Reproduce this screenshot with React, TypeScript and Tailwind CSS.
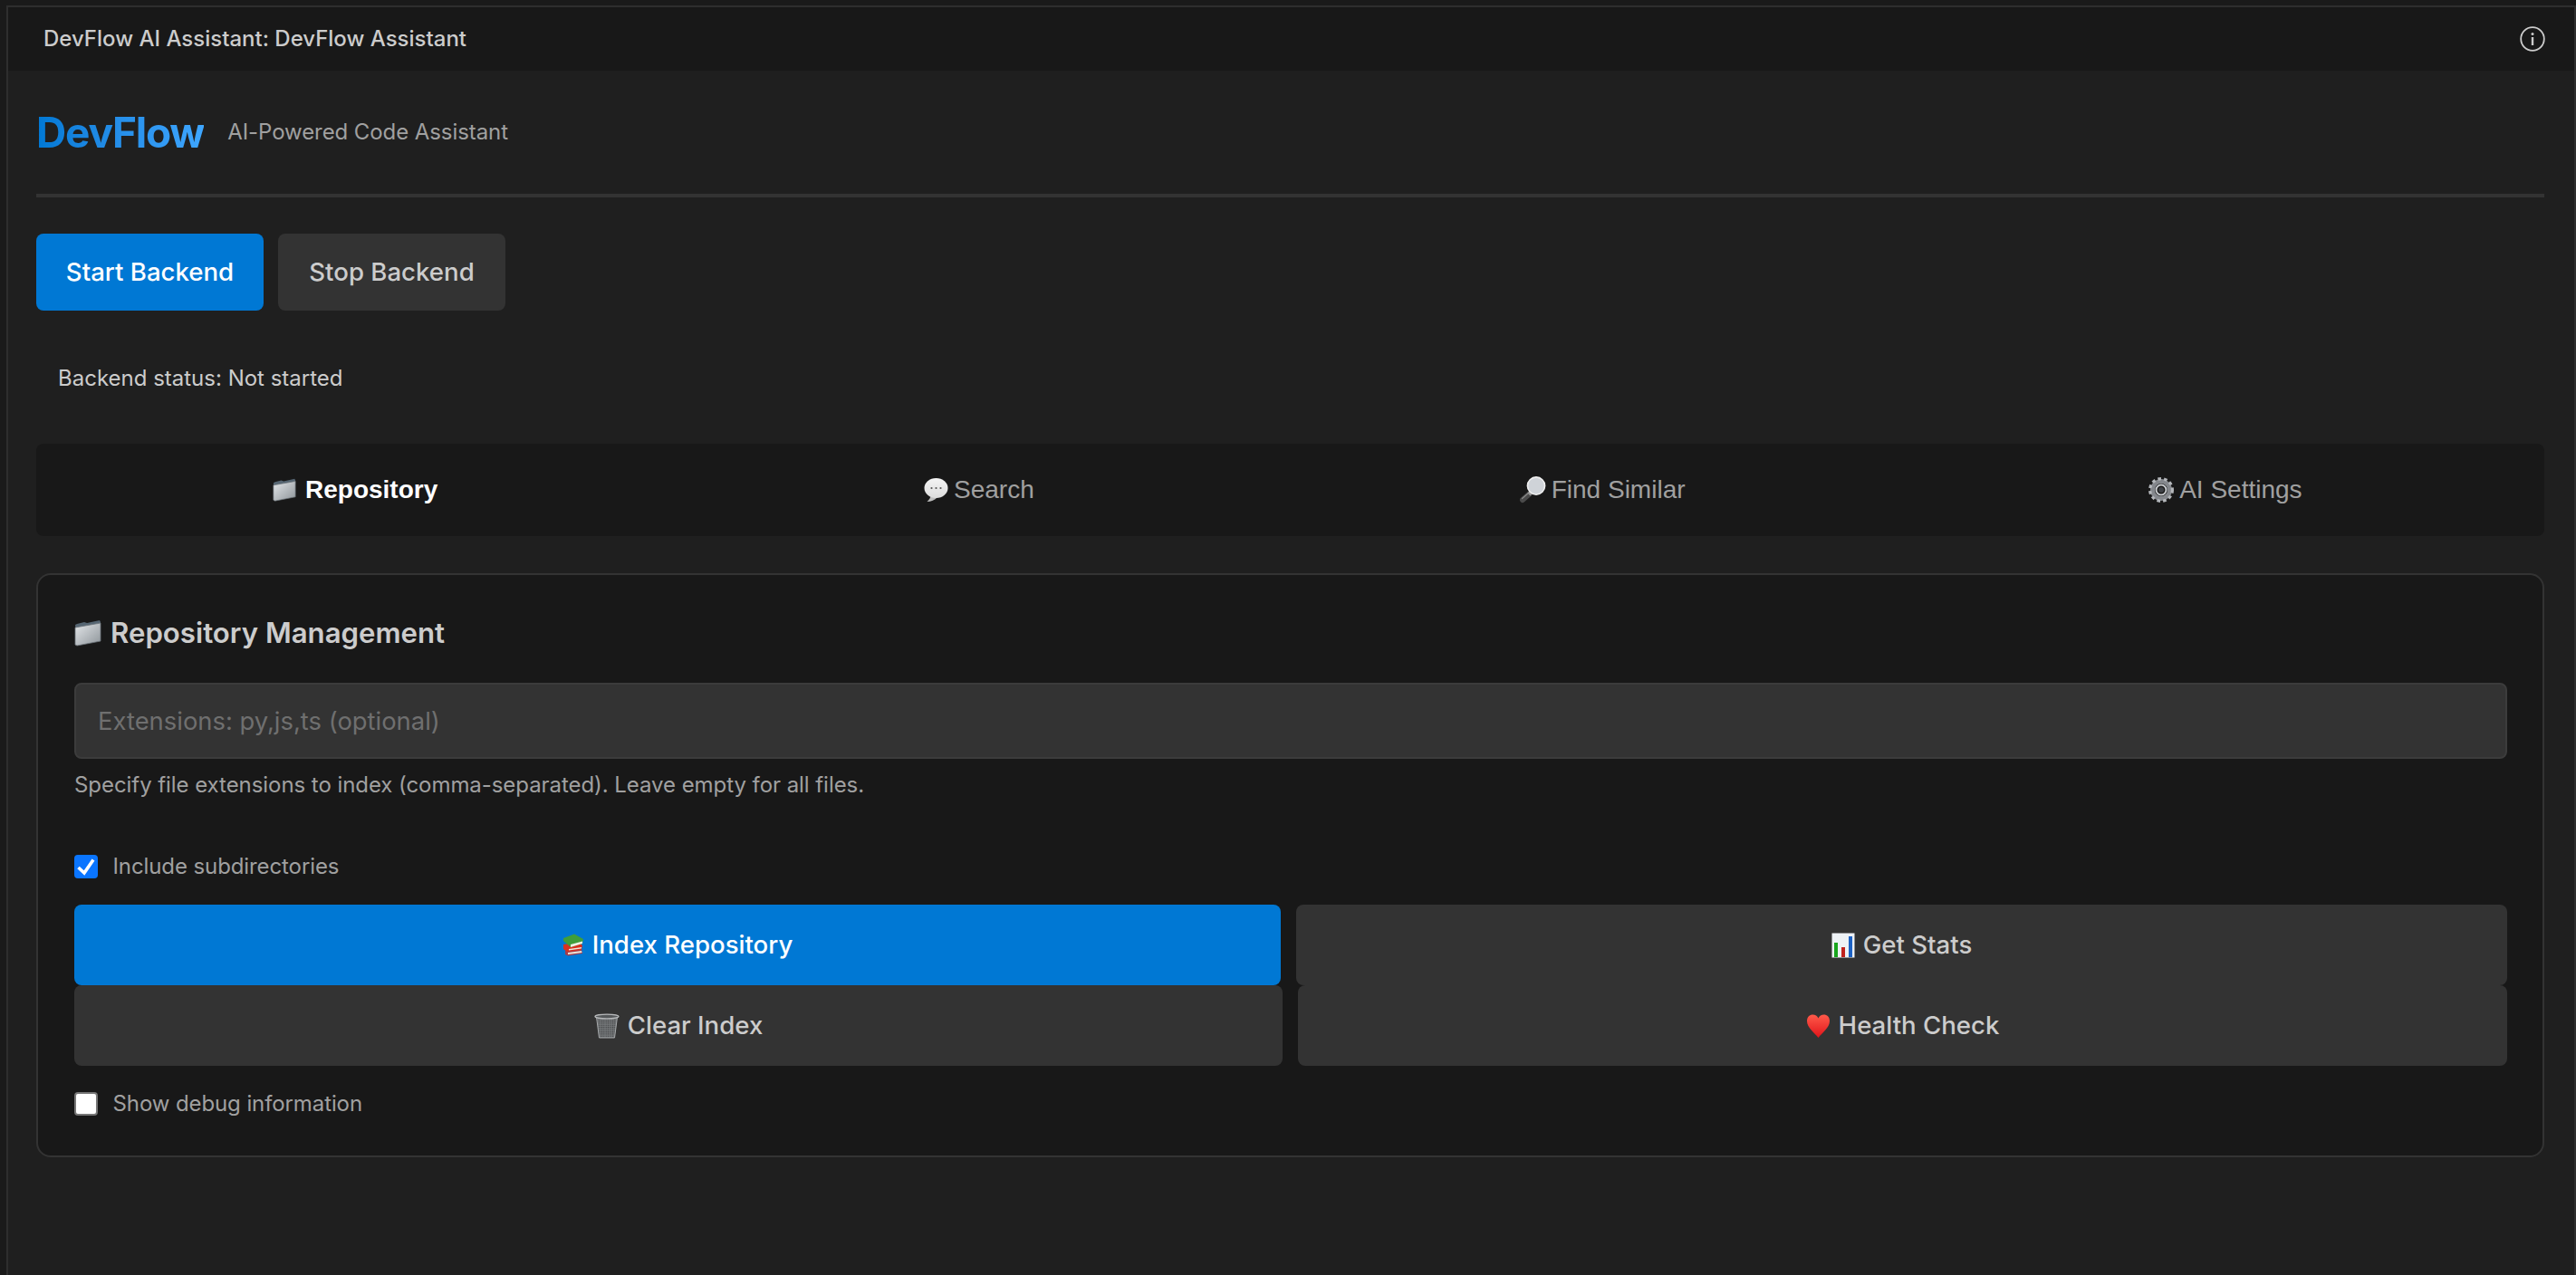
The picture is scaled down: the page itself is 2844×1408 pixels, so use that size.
import React from "react";

const Folder = ({ size = 30, id }: { size?: number; id: string }) => (
  <svg width={size} height={size} viewBox="0 0 30 30" className="shrink-0">
    <defs>
      <linearGradient id={id} x1="0" y1="0" x2="1" y2="1">
        <stop offset="0" stopColor="#e4e7ea" />
        <stop offset="1" stopColor="#8d9499" />
      </linearGradient>
    </defs>
    <path d="M1 6 L3 5 L11 3 L14 4 L28 1 L29 3 L29 8 L2 13 Z" fill="#566673" />
    <path d="M1 9 L29 4 L29 24 L3 29 L1 28 Z" fill={`url(#${id})`} stroke="#6b7278" strokeWidth="0.8" />
  </svg>
);

const Bubble = () => (
  <svg width="28" height="28" viewBox="0 0 28 28" className="shrink-0">
    <defs>
      <linearGradient id="bub" x1="0" y1="0" x2="0" y2="1">
        <stop offset="0" stopColor="#f4f4f4" />
        <stop offset="1" stopColor="#dcdcdc" />
      </linearGradient>
    </defs>
    <path d="M9 19 C8.5 22 7 25 4.5 27 C9 27 13 25.5 16 22 Z" fill="#bdbdbd" />
    <ellipse cx="14.5" cy="12" rx="13" ry="11" fill="url(#bub)" />
    <circle cx="9.5" cy="12" r="1.1" fill="#555555" />
    <circle cx="14.5" cy="12" r="1.1" fill="#555555" />
    <circle cx="19.5" cy="12" r="1.1" fill="#555555" />
  </svg>
);

const Magnifier = () => (
  <svg width="30" height="30" viewBox="0 0 30 30" className="shrink-0">
    <path d="M12 19 L4 26" stroke="#4a4a4a" strokeWidth="6" strokeLinecap="round" />
    <path d="M11 18 L3.5 24.5" stroke="#8a8a8a" strokeWidth="1.2" strokeLinecap="round" />
    <path d="M14 17 L11 20" stroke="#9a9a9a" strokeWidth="4" />
    <circle cx="19" cy="10.5" r="9.6" fill="#cfd3d8" stroke="#f0f0f0" strokeWidth="1.6" />
  </svg>
);

const Gear = () => (
  <svg width="28" height="30" viewBox="0 0 28 30" className="shrink-0">
    <circle cx="14" cy="15" r="9.5" fill="none" stroke="#84878c" strokeWidth="5" />
    <circle cx="14" cy="15" r="12.4" fill="none" stroke="#b4b7bb" strokeWidth="3.2" strokeDasharray="3.6 3.2" />
    <circle cx="14" cy="15" r="5.5" fill="none" stroke="#c9ccd0" strokeWidth="2" />
    <circle cx="14" cy="15" r="3" fill="#3f4247" />
  </svg>
);

const Books = () => (
  <svg width="24" height="25" viewBox="0 0 24 25" className="shrink-0">
    <path d="M3 19 L21 17 L22 22 L6 24.5 L3 23 Z" fill="#a33d4d" />
    <path d="M6 21 L21 19 L21.5 21 L6 23 Z" fill="#e9e4d8" />
    <path d="M1 12 L18 9 L22 13 L21 18 L5 20 L1 17 Z" fill="#d8311f" />
    <path d="M7 17 L21 15 L20.8 16.6 L7 18.6 Z" fill="#ece6da" />
    <path d="M1 5 L13 0.5 L23 6 L22 11 L9 15 L1 8 Z" fill="#3f9e3a" />
    <path d="M9 12 L22 8.5 L22 11 L9 15 Z" fill="#eef0e4" />
  </svg>
);

const Chart = () => (
  <svg width="26" height="28" viewBox="0 0 26 28" className="shrink-0">
    <rect x="0.5" y="0.5" width="25" height="27" fill="#eef2f6" />
    <rect x="3" y="11" width="4" height="16" fill="#19a51e" />
    <rect x="11" y="16" width="4" height="11" fill="#c0231e" />
    <rect x="19" y="4" width="4" height="23" fill="#1d62c4" />
  </svg>
);

const Trash = () => (
  <svg width="28" height="28" viewBox="0 0 28 28" className="shrink-0">
    <defs>
      <pattern id="mesh" width="2.4" height="2.4" patternUnits="userSpaceOnUse">
        <rect width="2.4" height="2.4" fill="#737678" />
        <circle cx="1.2" cy="1.2" r="0.7" fill="#3f4143" />
      </pattern>
    </defs>
    <path d="M2.5 4 L25.5 4 L22.5 27 L5.5 27 Z" fill="url(#mesh)" stroke="#a7aaac" strokeWidth="1" />
    <ellipse cx="14" cy="3.5" rx="13" ry="2.4" fill="#55585a" stroke="#b8babc" strokeWidth="1.4" />
  </svg>
);

const Heart = () => (
  <svg width="27" height="26" viewBox="0 0 27 26" className="shrink-0">
    <defs>
      <linearGradient id="hg" x1="0" y1="0" x2="0" y2="1">
        <stop offset="0" stopColor="#ff5a4a" />
        <stop offset="1" stopColor="#e0141a" />
      </linearGradient>
    </defs>
    <path d="M13.5 26 C9 20 1 15 1 7.5 C1 3 4 0.5 7.5 0.5 C10 0.5 12.5 2 13.5 4.5 C14.5 2 17 0.5 19.5 0.5 C23 0.5 26 3 26 7.5 C26 15 18 20 13.5 26 Z" fill="url(#hg)" />
  </svg>
);

const Tab = ({ icon, label, active }: { icon: React.ReactNode; label: string; active?: boolean }) => (
  <div className={`flex-1 flex items-center justify-center gap-[6px] text-[28px] font-['Liberation_Sans',sans-serif] ${active ? "font-bold text-white" : "text-[#a0a0a0]"}`}>
    {icon}
    <span>{label}</span>
  </div>
);

const ActionButton = ({ icon, label, primary }: { icon: React.ReactNode; label: string; primary?: boolean }) => (
  <button className={`h-[89px] rounded-[8px] flex items-center justify-center gap-[9px] text-[27.6px] font-[550] ${primary ? "bg-[#0078d4] text-white" : "bg-[#333333] text-[#cccccc]"}`}>
    {icon}
    <span>{label}</span>
  </button>
);

const Check = ({ checked, label }: { checked?: boolean; label: string }) => (
  <div className="flex items-center gap-[16.5px] text-[24px] leading-[26px] tracking-[-0.1px] text-[#a0a0a0]">
    {checked ? (
      <span className="w-[26px] h-[26px] rounded-[4px] bg-[#0a75ff] flex items-center justify-center">
        <svg width="26" height="26" viewBox="0 0 26 26">
          <path d="M4.5 14 L11 20 L21 5.5" fill="none" stroke="#ffffff" strokeWidth="3.6" />
        </svg>
      </span>
    ) : (
      <span className="w-[26px] h-[26px] rounded-[4px] bg-white border-2 border-[#767676]" />
    )}
    <span>{label}</span>
  </div>
);

export default function App() {
  return (
    <div className="w-full h-[1408px] overflow-hidden bg-[#1a1a1a] pt-[6px] pl-[7px] font-['Inter',sans-serif]">
      <div className="h-full flex flex-col bg-[#1f1f1f] border-t-2 border-l-2 border-r-2 border-[#2e2e2e]">
        <div className="h-[70px] shrink-0 bg-[#181818] flex items-center justify-between pl-[39px] pr-[32px]">
          <span className="text-[24px] font-medium text-[#cccccc]">DevFlow AI Assistant: DevFlow Assistant</span>
          <svg width="28" height="28" viewBox="0 0 28 28" className="shrink-0">
            <circle cx="14" cy="14" r="12.8" fill="none" stroke="#cccccc" strokeWidth="1.8" />
            <circle cx="14" cy="8.6" r="1.5" fill="#cccccc" />
            <rect x="12.8" y="12" width="2.4" height="9" fill="#cccccc" />
          </svg>
        </div>
        <div className="flex-1 flex flex-col pl-[31px] pr-[33px]">
          <div className="h-[140px] shrink-0 flex items-center gap-[26px] border-b-4 border-[#333333]">
            <h1 className="text-[46px] font-bold tracking-[-1.2px] bg-gradient-to-r from-[#0078d4] to-[#3ea6ff] bg-clip-text text-transparent">DevFlow</h1>
            <span className="text-[24px] tracking-[-0.08px] text-[#a0a0a0]">AI-Powered Code Assistant</span>
          </div>
          <div className="mt-[40px] flex gap-[16px]">
            <button className="w-[251px] h-[85px] rounded-[8px] bg-[#0078d4] text-white text-[27.6px] font-[550]">Start Backend</button>
            <button className="w-[251px] h-[85px] rounded-[8px] bg-[#333333] text-[#cccccc] text-[27.6px] font-[550]">Stop Backend</button>
          </div>
          <div className="mt-[58px] pl-[24px] text-[24px] leading-[34px] text-[#cccccc]">Backend status: Not started</div>
          <div className="mt-[55px] h-[102px] rounded-[8px] bg-[#181818] flex px-[8px]">
            <Tab active icon={<span className="mr-[4px] flex"><Folder size={26} id="fa" /></span>} label="Repository" />
            <Tab icon={<Bubble />} label="Search" />
            <Tab icon={<Magnifier />} label="Find Similar" />
            <Tab icon={<Gear />} label="AI Settings" />
          </div>
          <div className="mt-[41px] h-[645px] rounded-[16px] border-2 border-[#333333] bg-[#181818] pl-[40px] pr-[39px] flex flex-col">
            <div className="mt-[46px] h-[36px] flex items-center gap-[10px] text-[31.2px] font-semibold text-[#cccccc]">
              <Folder id="fb" />
              <span>Repository Management</span>
            </div>
            <input
              readOnly
              placeholder="Extensions: py,js,ts (optional)"
              className="mt-[37px] h-[84px] rounded-[8px] border-2 border-[#3c3c3c] bg-[#333333] px-[24px] text-[27.4px] placeholder:text-[#6f6f6f] outline-none"
            />
            <p className="mt-[14px] text-[24px] leading-[30px] tracking-[-0.06px] text-[#a0a0a0]">Specify file extensions to index (comma-separated). Leave empty for all files.</p>
            <div className="mt-[62px]">
              <Check checked label="Include subdirectories" />
            </div>
            <div className="mt-[29px] grid grid-cols-[1332px_1fr] gap-x-[17px]">
              <ActionButton primary icon={<Books />} label="Index Repository" />
              <ActionButton icon={<Chart />} label="Get Stats" />
            </div>
            <div className="grid grid-cols-[1334px_1fr] gap-x-[17px]">
              <ActionButton icon={<Trash />} label="Clear Index" />
              <ActionButton icon={<Heart />} label="Health Check" />
            </div>
            <div className="mt-[29px]">
              <Check label="Show debug information" />
            </div>
          </div>
        </div>
      </div>
    </div>
  );
}
